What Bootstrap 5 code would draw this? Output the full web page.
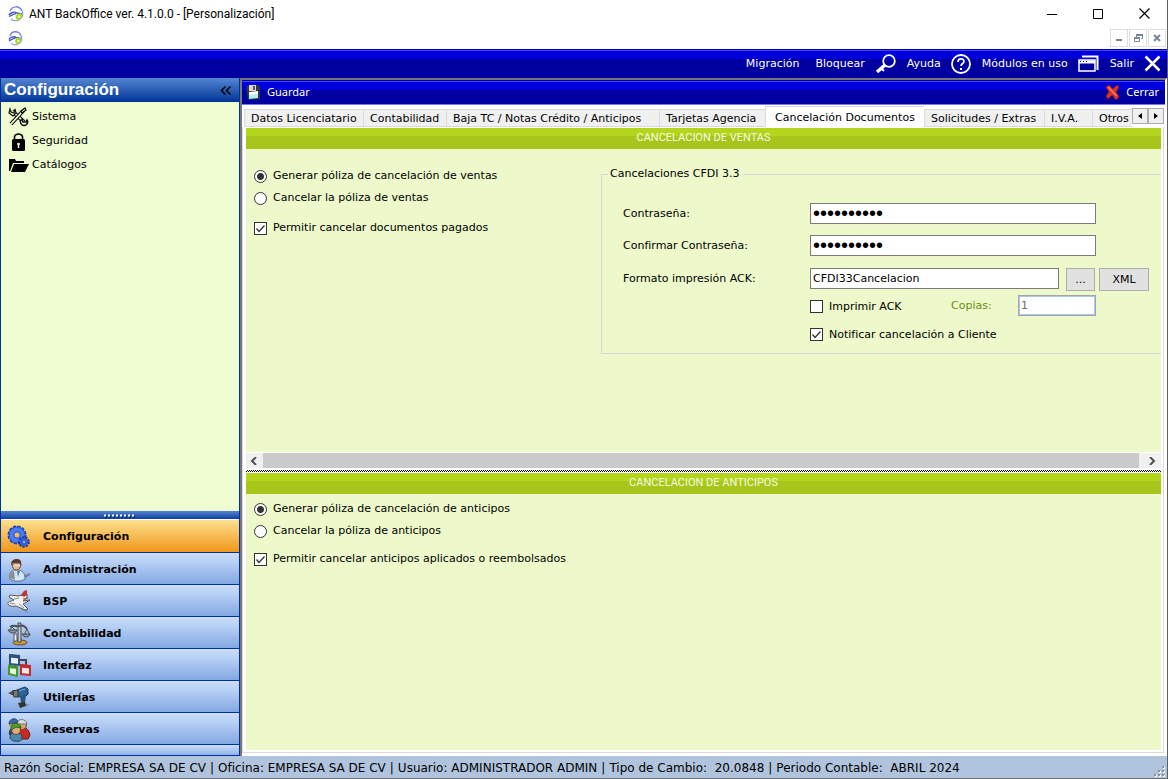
<!DOCTYPE html>
<html lang="es">
<head>
<meta charset="utf-8">
<meta name="viewport" content="width=device-width, initial-scale=1">
<title>ANT BackOffice ver. 4.1.0.0 - [Personalización]</title>
<link href="https://cdn.jsdelivr.net/npm/bootstrap@5.3.0/dist/css/bootstrap.min.css" rel="stylesheet">
<style>
  :root { --ui: "DejaVu Sans", Verdana, sans-serif; --panel: #edf9ca; --edge: #00309c; }
  body { font-family: var(--ui); font-size: 11px; line-height: 16px; color: #000; background: #fff; border-right: 1px solid #606060; }
  button, input { font-family: inherit; font-size: inherit; line-height: inherit; }
  svg { display: block; flex: none; }
  .app-title { height: 27px; font-family: Roboto, "Segoe UI", sans-serif; font-size: 12px; padding-left: 8px; gap: 5px; }
  .win-btn { width: 46px; height: 27px; }
  .bare { border: 0; background: none; padding: 0; color: inherit; }
  .mdi-bar { height: 22px; padding-left: 8px; padding-right: 1px; }
  .mdi-btn { width: 18px; height: 18px; border: 1px solid #dedede; background: #fff; padding: 0; }
  .mdi-set { gap: 1px; }
  .blue-bar { color: #fff; background: linear-gradient(#0000a0 0 1px, #4646f5 1px 2px, #0000dc 2px 10px, #0000a0 10px); }
  .menu-bar { height: 29px; padding-right: 6px; gap: 11px; }
  .menu-bar button { display: flex; align-items: center; gap: 10px; }
  .menu-first { margin-right: 5px; }
  .tool-bar { height: 25px; font-family: "Noto Sans", Tahoma, sans-serif; border-bottom: 1px solid #7878f5; padding: 0 6px 0 4px; }
  .tool-bar button { gap: 6px; }
  .side-panel { width: 240px; flex: none; border: 1px solid var(--edge); border-top: 0; background: #effbd0; }
  .side-head { height: 24px; padding: 0 7px 0 3px; color: #fff; font: bold 17px/22px "Liberation Sans", Arial, sans-serif; background: linear-gradient(#5585d2, #003596); }
  .side-nav { padding-top: 3px; }
  .side-link { height: 24px; padding-left: 7px; gap: 3px; color: #000; text-decoration: none; }
  .side-grip { height: 9px; background: linear-gradient(#5585d2, #0d409f 8px, #fff 8px); }
  .side-mod { height: 32px; width: 100%; border: 0; border-bottom: 1px solid var(--edge); padding: 2px 6px 0; gap: 11px; font-weight: bold; text-align: left; color: #000; background: linear-gradient(#cbdffc, #84a9e3); }
  .side-mod.active { height: 33px; background: linear-gradient(#fde08e, #f0961a); }
  .side-tail { height: 10px; background: linear-gradient(#cbdffc, #8fb2e8); }
  .doc-frame { min-width: 0; border: 2px solid #777; border-right-color: #fff; border-bottom: 0; }
  .doc-tabs { height: 22px; padding-left: 2px; border: 0; }
  .tab-strip { display: grid; grid-template-columns: 119px 83px 213px 106px 159px 120px 48px 1fr; align-items: end; min-width: 0; }
  .doc-tabs .nav-link { border: 1px solid #dadada; border-right: 0; border-radius: 0; background: #f0f0f0; color: #000; height: 18px; padding: 0 6px; line-height: 17px; white-space: nowrap; margin: 0; text-align: left; }
  .doc-tabs .nav-link.active { height: 21px; background: #fff; border-color: #dadada; border-bottom: 0; line-height: 19px; text-align: center; }
  .tab-steps { margin-right: 1px; padding-top: 3px; }
  .tab-step { width: 16px; height: 16px; border: 1px solid #adadad; background: #f0f0f0; padding: 0; }
  .doc-body { border: 1px solid #dadada; border-top: 0; background: #fff; padding: 1px 2px 2px 3px; margin: 0 1px 3px 0; }
  .band { height: 21px; line-height: 19px; text-align: center; color: #f6fbe0; font-family: Roboto, Arial, sans-serif; background: linear-gradient(#b3d51e 0 8px, #a8c51c 8px); }
  .pane { background: var(--panel); min-height: 0; }
  .pane-top { flex: 303 1 0; }
  .pane-bottom { flex: 256 1 0; }
  .opts { padding-left: 8px; width: 355px; flex: none; }
  .opt { display: flex; align-items: center; gap: 6px; min-height: 0; height: 22px; padding: 0; margin: 0; }
  .opt label { white-space: nowrap; }
  .opt-gap { margin-top: 6px; }
  .opt .form-check-input { float: none; margin: 0; width: 13px; height: 13px; flex: none; border: 1px solid #333; background-color: #fff; box-shadow: none; border-radius: 0; background-image: none; }
  .opt .form-check-input[type=radio] { border-radius: 50%; }
  .opt .form-check-input[type=radio]:checked { background-image: radial-gradient(circle, #333 0 3px, transparent 4px); }
  .opt .form-check-input[type=checkbox]:checked { background-size: 11px 11px; background-image: url("data:image/svg+xml,%3Csvg xmlns='http://www.w3.org/2000/svg' viewBox='0 0 11 11'%3E%3Cpath d='M1.500 5.500l2.500 3L9.500 2.500' fill='none' stroke='%23333' stroke-width='1.300'/%3E%3C/svg%3E"); }
  .cfdi { min-width: 0; border: 1px solid #d8d8d8; border-right: 0; height: 189px; padding: 0 0 0 21px; }
  .cfdi legend { float: none; width: auto; margin: 0 0 0 -15px; padding: 0 2px; font-size: 11px; line-height: 18px; }
  .cfdi-grid { display: grid; grid-template-columns: 187px 256px 83px; grid-template-rows: 32px 33px 27px 28px 22px; padding-top: 20px; line-height: 21px; }
  .field { height: 21px; border: 1px solid #7a7a7a; border-radius: 0; background: #fff; padding: 0 2px; color: #000; min-width: 0; }
  .field.secret { font-family: "Liberation Sans", Arial, sans-serif; font-size: 20px; line-height: 19px; }
  .field-wide { width: 286px; }
  .field-mid { width: 249px; }
  .btn-std { height: 23px; border: 1px solid #adadad; border-radius: 0; background: #e1e1e1; padding: 0; font-size: 11px; line-height: 22px; color: #000; }
  .btn-xml { width: 50px; }
  .field.off { width: 78px; color: #6d6d6d; border: 1px solid #a5a5a5; box-shadow: inset 0 0 0 1px #a9c8f0; }
  .wide-row { grid-column: 2 / 4; }
  .opt-ack { width: 141px; }
  .copies { color: #6b8e10; width: 67px; }
  .h-scroll { height: 17px; border-top: 1px solid #fff; border-bottom: 1px solid #fff; background: #f0f0f0; }
  .h-thumb { background: #cacaca; margin-right: 5px; }
  .split { height: 4px; background: repeating-conic-gradient(#000 0 25%, #fff 0 50%) 0 0 / 2px 2px; border-top: 1px solid #fff; border-bottom: 1px solid #fff; }
  .status { height: 23px; font-size: 12px; line-height: 24px; background: #b0c4de; border-bottom: 1px solid #707070; padding: 0 2px 0 4px; gap: 4px; white-space: pre; }
</style>
</head>
<body class="d-flex flex-column min-vh-100">

<svg width="0" height="0" class="position-absolute">
  <symbol id="logo" viewBox="0 0 16 16">
    <path d="M2 5C4 0 11-1 14 5" fill="none" stroke="#7684d6" stroke-width="1.500"/>
    <path d="M1 9c1-2 5-4 8-2l5 1M1 10c2 1 4-3 7-2" fill="none" stroke="#4656b4" stroke-width="1.400"/>
    <path d="M3 13c3 3 9 2 11-2 1-2 1-4 0-6" fill="none" stroke="#8d9ae0" stroke-width="1.200"/>
    <path d="M8 9c2-2 5-2 6-1 0 3-1 6-4 6-2 0-3-3-2-5z" fill="#a6d820"/><circle cx="11" cy="10.500" r="1.300" fill="#eefac0"/>
  </symbol>
</svg>

<header>
  <div class="app-title d-flex align-items-center">
    <svg width="16" height="16"><use href="#logo"/></svg>
    <span>ANT BackOffice ver. 4.1.0.0 - [Personalización]</span>
    <div class="d-flex ms-auto">
      <button class="bare win-btn" aria-label="Minimizar"><svg class="mx-auto" width="10" height="10"><path d="M0 5.500h10" stroke="#000"/></svg></button>
      <button class="bare win-btn" aria-label="Maximizar"><svg class="mx-auto" width="10" height="10"><path d="M.5.5h9v9h-9z" fill="none" stroke="#000"/></svg></button>
      <button class="bare win-btn" aria-label="Cerrar ventana"><svg class="mx-auto" width="11" height="11"><path d="M.5.5l10 10M10.500.5l-10 10" stroke="#000" stroke-width="1.200"/></svg></button>
    </div>
  </div>
  <div class="mdi-bar d-flex align-items-center">
    <svg width="15" height="15"><use href="#logo"/></svg>
    <div class="mdi-set d-flex ms-auto">
      <button class="mdi-btn" aria-label="Minimizar documento"><svg class="mx-auto" width="8" height="8"><path d="M1 6h6" stroke="#76879a" stroke-width="2"/></svg></button>
      <button class="mdi-btn" aria-label="Restaurar documento"><svg class="mx-auto" width="9" height="8"><path d="M2.500 3V.5h6v4H7M.5 3.500h5v4h-5z" fill="none" stroke="#76879a"/><path d="M2 1h7M0 4h6" stroke="#76879a" stroke-width="2"/></svg></button>
      <button class="mdi-btn" aria-label="Cerrar documento"><svg class="mx-auto" width="8" height="8"><path d="M1 1l6 6M7 1L1 7" stroke="#76879a" stroke-width="2"/></svg></button>
    </div>
  </div>
  <nav class="blue-bar menu-bar d-flex align-items-center justify-content-end">
    <button class="bare menu-first">Migración</button>
    <button class="bare">Bloquear
      <svg width="21" height="20" viewBox="0 0 21 20" fill="none" stroke="#fff"><circle cx="14" cy="7" r="5.800" stroke-width="1.800"/><path d="M10 11L2 18" stroke-width="3.500"/><path d="M6 14l3 3" stroke-width="2"/></svg></button>
    <button class="bare">Ayuda
      <svg width="20" height="20" viewBox="0 0 20 20" fill="none" stroke="#fff"><circle cx="10" cy="10" r="9" stroke-width="1.800"/><path d="M7 8c0-4 6-4 6-.5C13 9.500 10 9.500 10 12" stroke-width="1.700"/><path d="M10 14v2" stroke-width="2"/></svg></button>
    <button class="bare">Módulos en uso
      <svg width="21" height="18" viewBox="0 0 21 18" fill="none" stroke="#fff"><path d="M4 1.500h15.500V15" stroke-width="2"/><path d="M1 5h16v11H1z" stroke-width="1.500"/><path d="M1 7h16" stroke-width="3"/><path d="M2 6.500h9" stroke="#0000a0" stroke-dasharray="1 2"/></svg></button>
    <button class="bare">Salir
      <svg width="17" height="17" viewBox="0 0 17 17"><path d="M1.500 1.500l14 14M15.500 1.500l-14 14" stroke="#fff" stroke-width="2.500"/></svg></button>
  </nav>
</header>

<div class="d-flex flex-fill">
  <aside class="side-panel d-flex flex-column">
    <div class="side-head d-flex justify-content-between align-items-center"><span>Configuración</span>
      <button class="bare" aria-label="Contraer"><svg width="12" height="9"><path d="M5.500.5l-4 4 4 4M10.500.5l-4 4 4 4" fill="none" stroke="#000" stroke-width="1.500"/></svg></button></div>
    <nav class="side-nav flex-fill">
      <a href="#" class="side-link d-flex align-items-center">
        <svg width="21" height="20" viewBox="0 0 21 20" fill="none" stroke="#111"><path d="M4 4l12 11" stroke-width="4"/><path d="M4 4l12 11" stroke="#effbd0" stroke-width="1.800"/><path d="M15 4L3 17" stroke-width="4"/><path d="M15 4L3 17" stroke="#effbd0" stroke-width="1.800"/><path d="M17 1l-4 3 1 2 4-3z" stroke-width="1.300"/><path d="M2 2l1 3 3 1 1-4 1 4-3 3-4-3z" fill="#effbd0" stroke-width="1.200"/><path d="M19 13a3.500 3.500 0 1 1-5-1l1 3 3 0z" fill="#effbd0" stroke-width="1.500"/></svg>Sistema</a>
      <a href="#" class="side-link d-flex align-items-center">
        <svg width="21" height="20" viewBox="0 0 21 20"><path d="M6.500 9V5.500a4.500 4.500 0 0 1 8 0V9" fill="none" stroke="#000" stroke-width="1.600"/><rect x="4" y="8" width="13" height="12" rx="1.500"/><path d="M10.500 12v5" stroke="#effbd0" stroke-width="1.500"/><circle cx="10.500" cy="13" r="1.300" fill="#effbd0"/></svg>Seguridad</a>
      <a href="#" class="side-link d-flex align-items-center">
        <svg width="21" height="16" viewBox="0 0 21 16"><path d="M1 14V2h6l1 2h8v2H5L2 14z"/><path d="M6 7h15l-4 8H3z"/></svg>Catálogos</a>
    </nav>
    <div class="side-grip d-flex justify-content-center align-items-center"><svg width="32" height="4"><path d="M1 2.500h31" stroke="#0b2b6a" stroke-width="2" stroke-dasharray="2 2"/><path d="M0 1.500h31" stroke="#fff" stroke-width="2" stroke-dasharray="2 2"/></svg></div>
    <button class="side-mod active d-flex align-items-center">
      <svg width="25" height="24" viewBox="0 0 25 24"><circle cx="10" cy="10" r="8" fill="none" stroke="#1c3fb4" stroke-width="3" stroke-dasharray="3 1.200"/><circle cx="10" cy="10" r="5.500" fill="none" stroke="#2a50cc" stroke-width="6"/><circle cx="10" cy="10" r="5.500" fill="none" stroke="#4a7cf4" stroke-width="4"/><circle cx="17" cy="17" r="4.300" fill="none" stroke="#1a3494" stroke-width="3" stroke-dasharray="2 1"/><circle cx="17" cy="17" r="2.800" fill="#8fb0ff" stroke="#2f5cd8" stroke-width="3"/></svg>Configuración</button>
    <button class="side-mod d-flex align-items-center">
      <svg width="25" height="24" viewBox="0 0 25 24"><path d="M17 20l6-4-3 1z" stroke="#557" stroke-width="1.500" opacity=".6"/><path d="M3 21c-1-6 1-9 5-9h4c5 1 6 5 6 9-4 3-11 3-15 0z" fill="#cfe6f8" stroke="#5b7187"/><path d="M3 20c0-4 1-7 4-7l1 9z" fill="#8c8c8c"/><path d="M10 13l1 6 2-6z" fill="#4e7ba8"/><path d="M5 6c0 4 2 6 4.500 6S14 9 14 6z" fill="#e6bb94" stroke="#6b4a32"/><path d="M4 7c0-5 3-6 6-6s5 2 4 6l-2-2H6z" fill="#5a3d28"/><path d="M7 7h6" stroke="#fff"/></svg>Administración</button>
    <button class="side-mod d-flex align-items-center">
      <svg width="25" height="24" viewBox="0 0 25 24"><path d="M14 20l8 3-3-5z" fill="#667b9c" opacity=".5"/><path d="M3 5l8 1 5-1 4-1v4l-4 3 7-1-5 3-2 1 5 5-3 1-9-4c-4 1-7 0-8-2s3-3 6-4L2 7z" fill="#f1f1f1" stroke="#555"/><path d="M14 5l3-4 3-1v5l-3 2z" fill="#c3342c"/><path d="M7 9l5-1M3 13l5 1M12 14l5 4" stroke="#8a8a8a"/><path d="M16 9l5-1" stroke="#c3342c"/></svg>BSP</button>
    <button class="side-mod d-flex align-items-center">
      <svg width="25" height="24" viewBox="0 0 25 24"><ellipse cx="13" cy="20.500" rx="7" ry="2.500" fill="#c79a38" stroke="#60492a"/><path d="M11 1h3v19h-3z" fill="#c4cbd2" stroke="#444"/><path d="M3 5c4-3 6 0 9-1s6 0 8 3" fill="none" stroke="#4a5258" stroke-width="2"/><path d="M5 5L2 9h7zM20 7l-3 6h6z" fill="none" stroke="#555"/><path d="M1 8h9c-1 4-7 4-9 0z" fill="#8d96a0" stroke="#444"/><path d="M15 12h8c-1 4-6 4-8 0z" fill="#8d96a0" stroke="#444"/><path d="M7 12h3v7H7z" fill="#e7eff6" stroke="#556"/></svg>Contabilidad</button>
    <button class="side-mod d-flex align-items-center">
      <svg width="25" height="24" viewBox="0 0 25 24"><path d="M13 6h6v7M8 11v3" fill="none" stroke="#42484e" stroke-width="2"/><path d="M3 1l9 1v9L3 10z" fill="#e7f2fa" stroke="#2c5578" stroke-width="2"/><path d="M2 2l11 1" stroke="#2c5578" stroke-width="3"/><path d="M2 12l8 1v9l-8-2z" fill="#e7f7d9" stroke="#3e9a2a" stroke-width="2"/><path d="M1 13l10 1" stroke="#3e9a2a" stroke-width="2"/><path d="M14 11l9 1v9l-9-1z" fill="#fde6df" stroke="#c82830" stroke-width="2"/><path d="M13 12l11 1" stroke="#c82830" stroke-width="3"/></svg>Interfaz</button>
    <button class="side-mod d-flex align-items-center">
      <svg width="25" height="24" viewBox="0 0 25 24"><path d="M15 21l8-2-6-2z" fill="#566b8c" opacity=".6"/><path d="M10 4l8-3 3 2v5l-2 2-8 1z" fill="#2d6396" stroke="#1c3a58"/><path d="M13 10l6-1-1 8h-4z" fill="#2b577f"/><path d="M11 17l7-1 1 4-6 2z" fill="#333"/><path d="M5 5l6-1v7H7z" fill="#777" stroke="#333"/><path d="M1 7l6-2v5z" fill="#444"/><path d="M12 5l6-2" stroke="#78acd8"/></svg>Utilerías</button>
    <button class="side-mod d-flex align-items-center">
      <svg width="25" height="24" viewBox="0 0 25 24"><path d="M12 12c0-4 9-5 11 5l-2 4h-8z" fill="#c92a20" stroke="#6b1a16"/><circle cx="15" cy="7" r="4.500" fill="#d9a06f" stroke="#6b4a32"/><path d="M10 6c0-6 9-6 10 0z" fill="#d9dde0" stroke="#777"/><path d="M2 17c-1-5 2-8 6-8l3 8z" fill="#333f55"/><circle cx="6" cy="6" r="4" fill="#c9905f"/><path d="M2 6c0-6 8-7 9-2z" fill="#3b6dab" stroke="#264a78"/><path d="M3 20c0-5 4-7 8-5 4 0 6 6 2 8-4 1-9 0-10-3z" fill="#4b87ab" stroke="#25465c"/><circle cx="9" cy="12" r="4.500" fill="#e0ab78" stroke="#6b4a32"/><path d="M4 12c-1-8 9-9 10-2l-5-1z" fill="#4fa02d" stroke="#2d6618"/></svg>Reservas</button>
    <div class="side-tail"></div>
  </aside>

  <main class="doc-frame flex-fill d-flex flex-column">
    <div class="blue-bar tool-bar d-flex align-items-center justify-content-between">
      <button class="bare d-flex align-items-center">
        <svg width="15" height="16" viewBox="0 0 15 16"><path d="M0 2l12-1 2 2v12l-12 1z" fill="#30363c"/><path d="M3 1h7v6H3z" fill="#d8d8d8"/><path d="M7 2h2v4H7z" fill="#555"/><path d="M3 10l9-1v5l-9 1z" fill="#aeeef4"/><path d="M3 8l9-1v3l-9 1z" fill="#fff"/></svg>Guardar</button>
      <button class="bare d-flex align-items-center">
        <svg width="15" height="16" viewBox="0 0 15 16"><path d="M1 3l3-2 4 4 4-4 2 2-3 5 3 5-3 3-4-5-4 4-2-3 3-4z" fill="#d8352a" stroke="#8c1a20"/><path d="M3 3l9 9" stroke="#f47c68" stroke-width="1.500"/></svg>Cerrar</button>
    </div>
    <div class="doc-tabs nav nav-tabs d-flex flex-nowrap align-items-end">
      <div class="tab-strip flex-fill overflow-hidden" role="tablist">
        <button class="nav-link" role="tab">Datos Licenciatario</button>
        <button class="nav-link" role="tab">Contabilidad</button>
        <button class="nav-link" role="tab">Baja TC / Notas Crédito / Anticipos</button>
        <button class="nav-link" role="tab">Tarjetas Agencia</button>
        <button class="nav-link active" role="tab" aria-selected="true">Cancelación Documentos</button>
        <button class="nav-link" role="tab">Solicitudes / Extras</button>
        <button class="nav-link" role="tab">I.V.A.</button>
        <button class="nav-link" role="tab">Otros</button>
      </div>
      <div class="tab-steps d-flex align-self-start">
        <button class="tab-step" aria-label="Anterior"><svg class="mx-auto" width="4" height="6"><path d="M4 0v6L0 3z"/></svg></button>
        <button class="tab-step" aria-label="Siguiente"><svg class="mx-auto" width="4" height="6"><path d="M0 0v6l4-3z"/></svg></button>
      </div>
    </div>
    <div class="doc-body flex-fill d-flex flex-column">
      <div class="band">CANCELACION DE VENTAS</div>
      <section class="pane pane-top d-flex overflow-hidden">
        <div class="opts pt-3">
          <div class="form-check opt"><input class="form-check-input" type="radio" name="ventas" id="v1" checked><label for="v1">Generar póliza de cancelación de ventas</label></div>
          <div class="form-check opt"><input class="form-check-input" type="radio" name="ventas" id="v2"><label for="v2">Cancelar la póliza de ventas</label></div>
          <div class="form-check opt mt-2"><input class="form-check-input" type="checkbox" id="v3" checked><label for="v3">Permitir cancelar documentos pagados</label></div>
        </div>
        <fieldset class="cfdi flex-fill mt-3">
          <legend>Cancelaciones CFDI 3.3</legend>
          <div class="cfdi-grid">
            <label for="p1">Contraseña:</label>
            <div class="wide-row"><input class="field secret field-wide d-block" type="password" id="p1" value="contrasena"></div>
            <label for="p2">Confirmar Contraseña:</label>
            <div class="wide-row"><input class="field secret field-wide d-block" type="password" id="p2" value="contrasena"></div>
            <label for="fm">Formato impresión ACK:</label>
            <input class="field field-mid" id="fm" value="CFDI33Cancelacion">
            <div class="d-flex gap-1"><button class="btn btn-std flex-fill">...</button><button class="btn btn-std btn-xml">XML</button></div>
            <span></span>
            <div class="wide-row d-flex">
              <div class="form-check opt opt-ack"><input class="form-check-input" type="checkbox" id="ack"><label for="ack">Imprimir ACK</label></div>
              <label class="copies" for="cp">Copias:</label>
              <input class="field off" id="cp" value="1" disabled>
            </div>
            <span></span>
            <div class="wide-row form-check opt"><input class="form-check-input" type="checkbox" id="nt" checked><label for="nt">Notificar cancelación a Cliente</label></div>
          </div>
        </fieldset>
      </section>
      <div class="h-scroll d-flex align-items-stretch">
        <button class="bare px-1" aria-label="Desplazar a la izquierda"><svg width="9" height="8"><path d="M6 0L2 4l4 4" fill="none" stroke="#505050" stroke-width="2"/></svg></button>
        <div class="h-thumb flex-fill"></div>
        <button class="bare px-1" aria-label="Desplazar a la derecha"><svg width="9" height="8"><path d="M2 0l4 4-4 4" fill="none" stroke="#505050" stroke-width="2"/></svg></button>
      </div>
      <div class="split"></div>
      <div class="band">CANCELACION DE ANTICIPOS</div>
      <section class="pane pane-bottom">
        <div class="opts pt-1">
          <div class="form-check opt"><input class="form-check-input" type="radio" name="anticipos" id="a1" checked><label for="a1">Generar póliza de cancelación de anticipos</label></div>
          <div class="form-check opt"><input class="form-check-input" type="radio" name="anticipos" id="a2"><label for="a2">Cancelar la póliza de anticipos</label></div>
          <div class="form-check opt opt-gap"><input class="form-check-input" type="checkbox" id="a3" checked><label for="a3">Permitir cancelar anticipos aplicados o reembolsados</label></div>
        </div>
      </section>
    </div>
  </main>
</div>

<footer class="status d-flex">
  <span>Razón Social: EMPRESA SA DE CV</span><span>|</span>
  <span>Oficina: EMPRESA SA DE CV</span><span>|</span>
  <span>Usuario: ADMINISTRADOR ADMIN</span><span>|</span>
  <span>Tipo de Cambio:  20.0848</span><span>|</span>
  <span>Periodo Contable:  ABRIL 2024</span>
  <svg class="ms-auto align-self-end" width="12" height="12"><path fill="#fff" d="M10 1h2v2h-2zM6 5h2v2H6zM10 5h2v2h-2zM2 9h2v2H2zM6 9h2v2H6zM10 9h2v2h-2z"/><path fill="#8f9299" d="M9 0h2v2H9zM5 4h2v2H5zM9 4h2v2H9zM1 8h2v2H1zM5 8h2v2H5zM9 8h2v2H9z"/></svg>
</footer>

<script src="https://cdn.jsdelivr.net/npm/bootstrap@5.3.0/dist/js/bootstrap.bundle.min.js"></script>
</body>
</html>
